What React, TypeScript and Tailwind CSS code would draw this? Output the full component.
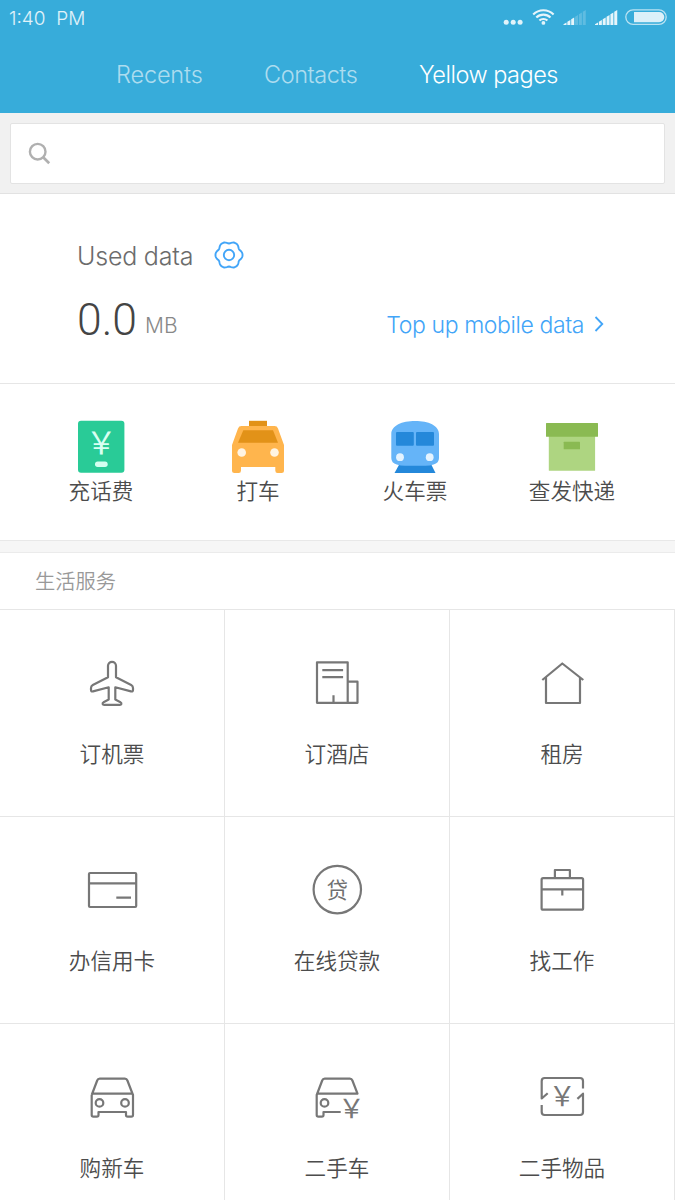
import type { ReactNode } from "react";

const tabs = [
  { name: "Recents", style: "w-[86px] tracking-[-0.15px] text-white/60" },
  { name: "Contacts", style: "w-[93px] tracking-[-0.45px] text-white/60" },
  { name: "Yellow pages", style: "w-[140px] tracking-[-0.5px] text-white" },
];

// outline of the six-lobed settings cog
const cog =
  Array.from({ length: 72 }, (_, i) => {
    const a = (i * Math.PI) / 36;
    const r = 12.7 + 1 * Math.cos(6 * a) - 0.15 * Math.cos(12 * a);
    return `${i === 0 ? "M" : "L"}${(15 + r * Math.cos(a)).toFixed(2)} ${(15 + r * Math.sin(a)).toFixed(2)}`;
  }).join("") + "Z";

function Bars({ x, lit }: { x: number; lit: number }) {
  return (
    <g>
      {[0, 1, 2, 3, 4, 5].map((i) => {
        const left = x + i * 3.85;
        const top = 18.3 - i * 2.5;
        return (
          <path
            key={i}
            d={`M${left} 19V${top}L${left + 3} ${top - 1.8}V19Z`}
            fill="white"
            fillOpacity={i < lit ? 0.88 : 0.2}
          />
        );
      })}
    </g>
  );
}

function StatusIcons() {
  return (
    <svg width="168" height="24" viewBox="0 0 168 24" fill="none">
      <g fill="white" fillOpacity="0.85">
        <circle cx="6.2" cy="16.3" r="2.5" />
        <circle cx="13.2" cy="16.3" r="2.5" />
        <circle cx="20.1" cy="16.3" r="2.5" />
        <circle cx="43.4" cy="16.9" r="1.9" />
      </g>
      <g stroke="white" strokeOpacity="0.88" strokeWidth="2.1">
        <path d="M33.2 8.5a14.4 14.4 0 0 1 20.4 0" />
        <path d="M36.3 11.6a10 10 0 0 1 14.2 0" />
        <path d="M39.4 14.6a5.7 5.7 0 0 1 8 0" />
      </g>
      <Bars x={63.5} lit={3} />
      <Bars x={95} lit={6} />
      <rect x="125.8" y="3.8" width="40.4" height="14.6" rx="7.3" stroke="white" strokeOpacity="0.65" strokeWidth="1.3" />
      <path d="M134 6h25.2a5 5 0 0 1 0 10.2H134z" fill="white" fillOpacity="0.82" />
    </svg>
  );
}

function Yen({ x, y, size, fill }: { x: number; y: number; size: number; fill: string }) {
  return (
    <text
      x={x}
      y={y}
      fontSize={size}
      fill={fill}
      stroke="none"
      textAnchor="middle"
      className="font-['Noto_Sans_CJK_SC',sans-serif] font-normal"
    >
      ￥
    </text>
  );
}

const shortcuts: { label: string; icon: ReactNode }[] = [
  {
    label: "充话费",
    icon: (
      <>
        <rect x="5" y="3.8" width="46.4" height="52" rx="3" fill="#29cb97" />
        <Yen x={28.3} y={37} size={31} fill="#d9fff2" />
        <rect x="22" y="44.6" width="12.7" height="5.4" rx="2.7" fill="#d4fff0" />
      </>
    ),
  },
  {
    label: "打车",
    icon: (
      <>
        <path d="M19 3.8h18V10H19z" fill="#e29218" />
        <path
          d="M11.5 9h33q2.6 0 3.5 2.4L54 28v25.5q0 2.5-2.5 2.5h-4q-2.2 0-2.2-2.5V50H11v3.5Q11 56 8.7 56H4.5Q2 56 2 53.5V28L8 11.4Q8.9 9 11.5 9z"
          fill="#ffb54d"
        />
        <path d="M13.3 13.3H43L48 25.7H8z" fill="#e29218" />
        <circle cx="11.7" cy="35.5" r="4.3" fill="#fff4e3" />
        <circle cx="44.5" cy="35.5" r="4.3" fill="#fff4e3" />
      </>
    ),
  },
  {
    label: "火车票",
    icon: (
      <>
        <path d="M12.5 47H44l4.5 9h-41z" fill="#2488da" />
        <path
          d="M4.3 17C4.3 8.5 15 4 28.2 4S52 8.5 52 17v24q0 5-5.5 6.5-3.5 1.2-8 1.2H17.8q-4.5 0-8-1.2Q4.3 46 4.3 41z"
          fill="#65b4f8"
        />
        <rect x="9" y="15" width="17.8" height="13.7" rx="1" fill="#2488da" />
        <rect x="29" y="15" width="18" height="13.7" rx="1" fill="#2488da" />
        <circle cx="13" cy="40.2" r="3.9" fill="#e4f3ff" />
        <circle cx="42.7" cy="40.2" r="3.9" fill="#e4f3ff" />
      </>
    ),
  },
  {
    label: "查发快递",
    icon: (
      <>
        <rect x="4.8" y="18" width="46.3" height="35.7" rx="0.5" fill="#aed581" />
        <rect x="2" y="6" width="52" height="13.8" rx="0.5" fill="#8aba52" />
        <rect x="19.7" y="24.8" width="16.3" height="7.5" rx="0.5" fill="#8aba52" />
      </>
    ),
  },
];

const services: { label: string; icon: ReactNode }[] = [
  {
    label: "订机票",
    icon: (
      <path d="M28 6.8a4 4 0 0 0-4 4V22.3L8.8 30Q7 31 7 33v2q0 1.9 2 1.4L24.7 32.3V44.6L20 46.9Q18.3 48 18.6 49q.3.9 1.6.9h15.6q1.3 0 1.6-.9.3-1-1.4-2.1l-4.7-2.3V32.3L47 36.4q2 .5 2-1.4v-2q0-2-1.8-3L32 22.3V10.8a4 4 0 0 0-4-4z" />
    ),
  },
  {
    label: "订酒店",
    icon: (
      <path d="M8 7.3h30.7v40.5H8zM38.7 26.7h9.8v21.1H38.5M13.3 15.2h20.8M13.3 22.2h20.8M24.5 40.3v7.5" />
    ),
  },
  {
    label: "租房",
    icon: <path d="M8.3 25L28.3 8.5 49.3 25M12 22.5V48h34V22.5" />,
  },
  {
    label: "办信用卡",
    icon: (
      <>
        <rect x="5" y="11" width="47.2" height="34" rx="1" />
        <path d="M5 21.3h47M32.3 35.7H47" />
      </>
    ),
  },
  {
    label: "在线贷款",
    icon: (
      <>
        <circle cx="28.3" cy="27.6" r="23.7" />
        <text
          x="28.2"
          y="35.6"
          fontSize="21.5"
          fill="#707070"
          stroke="none"
          textAnchor="middle"
          className="font-['Noto_Sans_CJK_SC',sans-serif] font-normal"
        >
          贷
        </text>
      </>
    ),
  },
  {
    label: "找工作",
    icon: (
      <>
        <rect x="7.6" y="16.2" width="41.5" height="31.5" rx="1.5" />
        <path d="M20.9 16V8h15v8M7.6 27.4h41.5M28.3 27.4v6" />
      </>
    ),
  },
  {
    label: "购新车",
    icon: (
      <>
        <path d="M7.7 26L13.2 11.5Q13.9 9.7 15.7 9.7h25.2q1.8 0 2.500 1.800L49 26v20q0 1.700-1.700 1.700h-3.600q-1.700 0-1.700-1.700v-3H14.500v3q0 1.700-1.700 1.700H9.400Q7.700 47.700 7.700 46V26M8 24.700h40.500" />
        <circle cx="15.5" cy="33.9" r="3.8" />
        <circle cx="41" cy="33.9" r="3.8" />
      </>
    ),
  },
  {
    label: "二手车",
    icon: (
      <>
        <path d="M31.7 43H14.5v3q0 1.700-1.700 1.700H9.400Q7.700 47.700 7.700 46V26L13.200 11.500Q13.900 9.700 15.700 9.700h25.200q1.800 0 2.500 1.800l5.100 13.200H8" />
        <circle cx="15.5" cy="33.9" r="3.8" />
        <Yen x={42.5} y={48.5} size={26.5} fill="#777" />
      </>
    ),
  },
  {
    label: "二手物品",
    icon: (
      <>
        <path d="M49 19.5V12q0-3-3-3H10.700q-3 0-3 3v17.500l6-5.300M7.700 36v7q0 3 3 3H46q3 0 3-3V24.700l-5.600 5.200" />
        <Yen x={28.3} y={37} size={27} fill="#777" />
      </>
    ),
  },
];

export default function App() {
  return (
    <div className="flex h-[1200px] w-[675px] flex-col overflow-hidden bg-white font-[Inter,'Noto_Sans_CJK_SC',sans-serif] font-[350]">
      <header className="h-[113px] shrink-0 bg-[#37acda]">
        <div className="flex h-9 justify-between pr-[7px] pl-[9px]">
          <span className="text-[19px] leading-[37px] whitespace-pre text-white/85">1:40  PM</span>
          <div className="pt-1.5">
            <StatusIcons />
          </div>
        </div>
        <nav className="flex h-[77px] gap-[62px] pl-[116px] text-[23.5px] leading-[77px] whitespace-nowrap">
          {tabs.map((tab) => (
            <div key={tab.name} className={tab.style}>
              {tab.name}
            </div>
          ))}
        </nav>
      </header>

      <div className="h-[81px] shrink-0 border-b border-[#e2e2e2] bg-[#f1f1f1] px-2.5 pt-2.5">
        <div className="flex h-[61px] items-center rounded-[2px] border border-[#e3e3e3] bg-white pl-[17px]">
          <svg width="24" height="24" viewBox="0 0 24 24" fill="none" stroke="#b0b0b0" strokeWidth="2.4">
            <circle cx="9.7" cy="9.7" r="7.8" />
            <path d="M15.2 15.2l6 6" strokeWidth="2.7" />
          </svg>
        </div>
      </div>

      <section className="h-[190px] shrink-0 border-b border-[#e6e6e6] pt-[45px] pr-[71px] pl-[77px]">
        <div className="flex h-9 items-center">
          <span className="w-[137px] text-[25px] tracking-[-0.2px] text-[#6c6c6c]">Used data</span>
          <svg
            width="30"
            height="30"
            viewBox="0 0 30 30"
            fill="none"
            stroke="#42a5f8"
            strokeWidth="1.9"
            strokeLinejoin="round"
            className="mb-[5px]"
          >
            <path d={cog} />
            <circle cx="15" cy="15" r="5.2" />
          </svg>
        </div>
        <div className="mt-[18px] flex items-start leading-[54px]">
          <span className="w-[68px] font-[Roboto,sans-serif] text-[44.5px] font-[350] text-[#444]">0.0</span>
          <span className="mt-1.5 text-[21px] text-[#888]">MB</span>
          <span className="mt-[5px] ml-auto flex items-center text-[23px] tracking-[-0.4px] text-[#42a5f8]">
            Top up mobile data
            <svg
              width="10"
              height="16"
              viewBox="0 0 10 16"
              fill="none"
              stroke="#42a5f8"
              strokeWidth="1.8"
              className="mb-0.5 ml-2.5"
            >
              <path d="M1.5 1l6.800 7-6.800 7" />
            </svg>
          </span>
        </div>
      </section>

      <section className="flex h-[157px] shrink-0 border-b border-[#e8e8e8] pt-[33px] pl-[22.5px]">
        {shortcuts.map((item) => (
          <div key={item.label} className="flex w-[157px] flex-col items-center">
            <svg width="56" height="58" viewBox="0 0 56 58">
              {item.icon}
            </svg>
            <span className="text-[21.6px] leading-8 text-[#4c4c4c]">{item.label}</span>
          </div>
        ))}
      </section>

      <div className="h-3 shrink-0 border-b border-[#ebebeb] bg-[#f6f6f6]" />

      <h2 className="h-[57px] shrink-0 border-b border-[#e6e6e6] pl-[35px] text-[20.3px] leading-[57px] font-[350] text-[#999]">
        生活服务
      </h2>

      <section className="grid shrink-0 grid-cols-3">
        {services.map((item) => (
          <div
            key={item.label}
            className="flex h-[207px] flex-col items-center border-r border-b border-[#e6e6e6] pt-[45px]"
          >
            <svg
              width="56"
              height="56"
              viewBox="0 0 56 56"
              fill="none"
              stroke="#777"
              strokeWidth="2.2"
              strokeLinejoin="round"
            >
              {item.icon}
            </svg>
            <span className="mt-[27px] text-[21.6px] leading-8 text-[#4c4c4c]">{item.label}</span>
          </div>
        ))}
      </section>
    </div>
  );
}
